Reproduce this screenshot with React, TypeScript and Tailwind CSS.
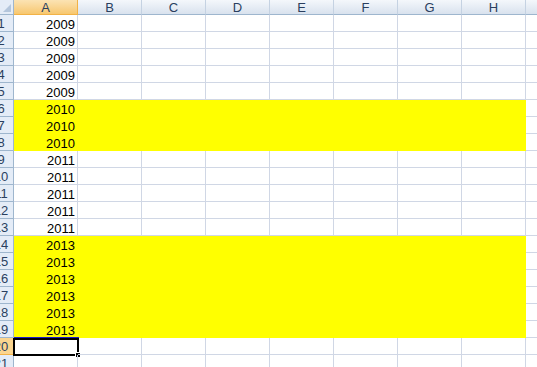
import React from 'react';

const cols = ['A', 'B', 'C', 'D', 'E', 'F', 'G', 'H'];

const values: (number | null)[] = [
  2009, 2009, 2009, 2009, 2009,
  2010, 2010, 2010,
  2011, 2011, 2011, 2011, 2011,
  2013, 2013, 2013, 2013, 2013, 2013,
  null, null,
];

const isYellow = (v: number | null) => v === 2010 || v === 2013;

const App = () => {
  return (
    <div
      className="w-[537px] h-[367px] overflow-hidden bg-white text-[13px] text-black"
      style={{ fontFamily: '"Liberation Sans", Arial, sans-serif' }}
    >
      {/* column headers */}
      <div className="flex h-[15px]">
        <div className="relative w-[14px] shrink-0 border-r border-b border-[#9eb6ce] bg-[#e4ecf7]">
          <div className="absolute right-[2px] bottom-[2px] w-0 h-0 [border-bottom:8px_solid_#b4c6dc] [border-left:8px_solid_transparent]" />
        </div>
        {cols.map((c) => (
          <div
            key={c}
            className={
              c === 'A'
                ? 'w-[64px] shrink-0 border-r border-b border-[#f2b246] bg-gradient-to-b from-[#fbe3b3] to-[#f7c76e] text-center leading-[15px] text-[#2a3f5f]'
                : 'w-[64px] shrink-0 border-r border-b border-r-[#c5d2e2] border-b-[#9eb6ce] bg-gradient-to-b from-[#f4f7fb] to-[#d9e2ee] text-center leading-[15px] text-[#2a3f5f]'
            }
          >
            {c}
          </div>
        ))}
        <div className="flex-1 border-b border-[#9eb6ce] bg-gradient-to-b from-[#f4f7fb] to-[#d9e2ee]" />
      </div>

      {/* rows */}
      {values.map((v, i) => {
        const row = i + 1;
        const yellow = isYellow(v);
        const selected = row === 20;
        return (
          <div key={row} className="flex h-[17px]">
            <div
              className={
                selected
                  ? 'w-[14px] shrink-0 overflow-hidden border-r border-b border-[#f2b246] bg-[#fbd58f]'
                  : 'w-[14px] shrink-0 overflow-hidden border-r border-b border-[#9eb6ce] bg-[#e4ecf7]'
              }
            >
              <div className="ml-[-10px] w-[22px] pt-[1px] text-center leading-[16px] text-[#2a3f5f]">{row}</div>
            </div>
            {cols.map((c) => (
              <div
                key={c}
                className={
                  yellow
                    ? 'relative w-[64px] shrink-0 border-r border-b border-[#ffff00] bg-[#ffff00] pt-[1px] pr-[2px] text-right leading-[17px]'
                    : 'relative w-[64px] shrink-0 border-r border-b border-[#d0d7e5] pt-[1px] pr-[2px] text-right leading-[17px]'
                }
              >
                {c === 'A' && v !== null ? v : null}
                {c === 'A' && selected && (
                  <>
                    <div className="absolute left-0 top-[-1px] w-[65px] h-[1px] bg-[#1c1cc8]" />
                    <div className="absolute left-[-1px] top-0 w-[66px] h-[18px] border-2 border-black" />
                    <div className="absolute left-[61px] top-[14px] w-[6px] h-[6px] bg-black border border-white" />
                  </>
                )}
              </div>
            ))}
            <div className="flex-1 border-b border-[#d0d7e5]" />
          </div>
        );
      })}
    </div>
  );
};

export default App;
